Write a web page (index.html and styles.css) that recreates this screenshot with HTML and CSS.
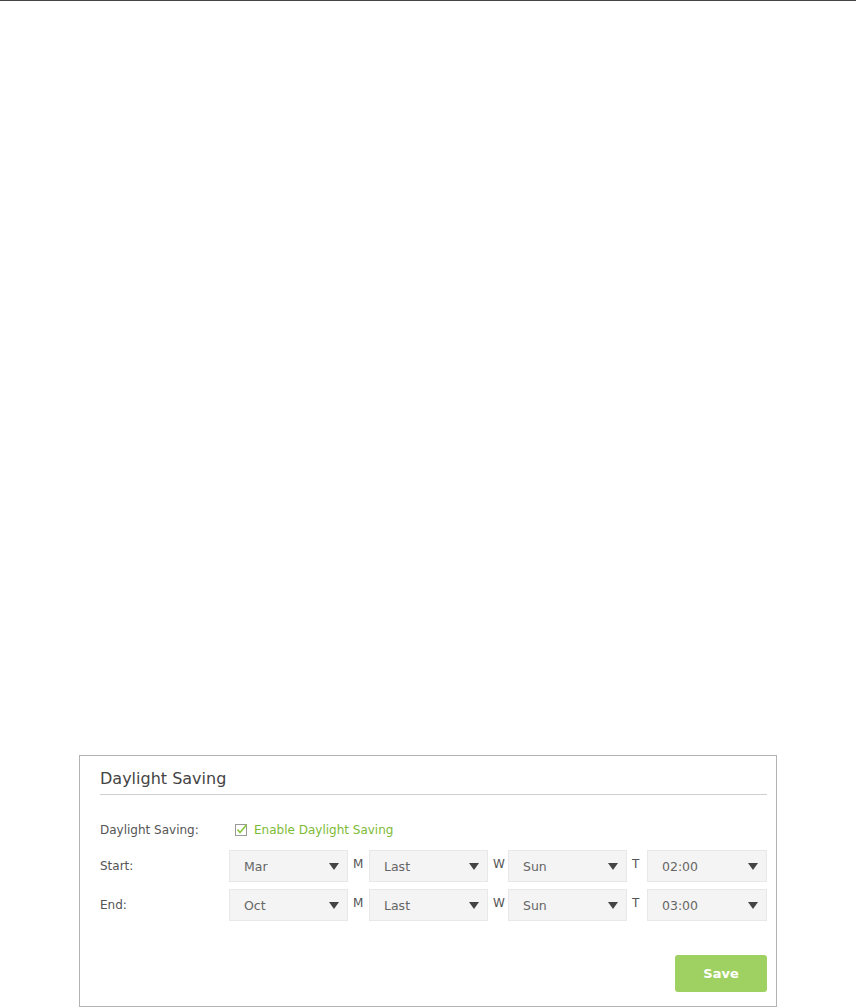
FILE: index.html
```html
<!DOCTYPE html>
<html lang="en">

<head>
    <meta charset="UTF-8">
    <title>Daylight Saving</title>
    <link rel="stylesheet" href="styles.css">
</head>

<body>

    <div class="top-line"></div>

    <div class="panel">
        <h2 class="panel-title">Daylight Saving</h2>

        <div class="row row-check">
            <span class="label">Daylight Saving:</span>
            <span class="check">
                <svg width="12" height="12" viewBox="0 0 12 12">
                    <rect x="0.5" y="0.5" width="11" height="11" fill="#fff" stroke="#999" />
                    <path d="M2.5 5.5 L5 8.5 L11.5 0.8" fill="none" stroke="#8cc63f" stroke-width="1.6" />
                </svg>
                Enable Daylight Saving
            </span>
        </div>

        <div class="row">
            <span class="label">Start:</span>
            <div class="select">Mar<span class="arrow"></span></div>
            <span class="unit">M</span>
            <div class="select">Last<span class="arrow"></span></div>
            <span class="unit">W</span>
            <div class="select">Sun<span class="arrow"></span></div>
            <span class="unit">T</span>
            <div class="select">02:00<span class="arrow"></span></div>
        </div>

        <div class="row">
            <span class="label">End:</span>
            <div class="select">Oct<span class="arrow"></span></div>
            <span class="unit">M</span>
            <div class="select">Last<span class="arrow"></span></div>
            <span class="unit">W</span>
            <div class="select">Sun<span class="arrow"></span></div>
            <span class="unit">T</span>
            <div class="select">03:00<span class="arrow"></span></div>
        </div>

        <div class="actions">
            <button class="btn-save">Save</button>
        </div>
    </div>

</body>

</html>
```

FILE: styles.css
```css
* {
    margin: 0;
    padding: 0;
    box-sizing: border-box;
    font-family: 'DejaVu Sans', Verdana, sans-serif;
}

body {
    background: #fff;
    color: #555;
    width: 856px;
    height: 1007px;
    overflow: hidden;
}

.top-line {
    height: 1px;
    background: #444;
}

.panel {
    margin: 754px 0 0 79px;
    width: 698px;
    height: 252px;
    border: 1px solid #b3b3b3;
    padding: 10px 9px 0 20px;
}

.panel-title {
    font-size: 16px;
    font-weight: normal;
    color: #444;
    padding-top: 3px;
    height: 29px;
    border-bottom: 1px solid #cfcfcf;
}

.row {
    display: flex;
    align-items: center;
    height: 32px;
    margin-top: 7px;
    font-size: 12px;
}

.row-check {
    height: 16px;
    margin-top: 27px;
    margin-bottom: 12px;
}

.label {
    width: 129px;
    color: #555;
}

.check {
    display: flex;
    align-items: center;
    gap: 7px;
    margin-left: 6px;
    color: #7dbb35;
    font-size: 12px;
}

.select {
    position: relative;
    width: 119px;
    height: 32px;
    background: #f4f4f4;
    border: 1px solid #e8e8e8;
    padding: 1px 0 0 14px;
    line-height: 30px;
    font-size: 12.5px;
    color: #666;
}

.select:last-child {
    width: 120px;
}

.arrow {
    position: absolute;
    right: 8px;
    top: 12px;
    border-left: 5px solid transparent;
    border-right: 5px solid transparent;
    border-top: 7px solid #444;
}

.unit {
    width: 20px;
    align-self: flex-start;
    padding: 7px 0 0 5px;
    font-size: 12px;
    color: #555;
}

.unit:nth-of-type(2) {
    width: 21px;
}

.actions {
    display: flex;
    justify-content: flex-end;
    margin-top: 34px;
}

.btn-save {
    width: 92px;
    height: 37px;
    background: #9fd162;
    color: #fff;
    border: none;
    border-radius: 3px;
    font-size: 13px;
    font-weight: bold;
}
```
